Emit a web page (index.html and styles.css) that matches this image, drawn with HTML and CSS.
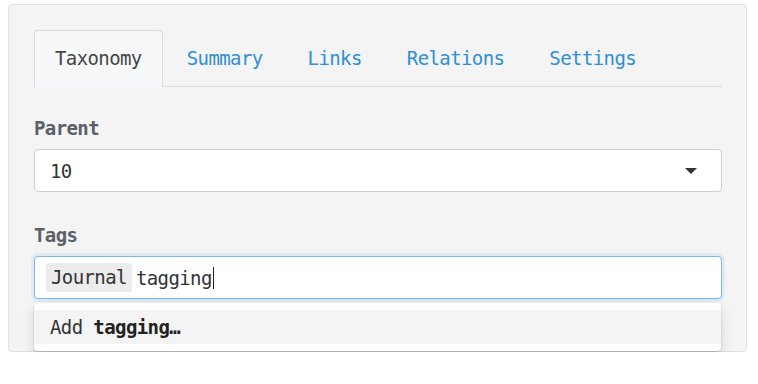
FILE: index.html
```html
<!DOCTYPE html>
<html lang="en">
<head>
<meta charset="UTF-8">
<meta name="viewport" content="width=device-width, initial-scale=1.0">
<title>Edit entry - Taxonomy</title>

<link rel="stylesheet" href="styles.css">

</head>
<body>
  <div class="panel">
    <ul class="tabs">
      <li class="tab active">Taxonomy</li>
      <li class="tab">Summary</li>
      <li class="tab">Links</li>
      <li class="tab">Relations</li>
      <li class="tab">Settings</li>
    </ul>

    <div class="field">
      <label class="fieldLabel">Parent</label>
      <div class="select">
        <span>10</span>
        <span class="caret"></span>
      </div>
    </div>

    <div class="field tagsField">
      <label class="fieldLabel">Tags</label>
      <div class="tagInput">
        <span class="chip">Journal</span>
        <span class="typed">tagging</span><span class="cursor"></span>
      </div>
      <div class="menu">
        <div class="menuItem">Add <b>tagging…</b></div>
      </div>
    </div>
  </div>
</body>
</html>
```

FILE: styles.css
```css
body {
    font-family: "DejaVu Sans Mono", monospace;
    font-size: 19px;
    letter-spacing: -0.6px;
    color: #333;
    background-color: #fff;
    margin: 0;
    padding: 4px 0 0 8px;
}
.panel {
    box-sizing: border-box;
    width: 739px;
    height: 348px;
    background-color: #f4f4f4;
    border: 1px solid #e1e1e1;
    border-radius: 4px;
    padding: 25px 24px 0 25px;
}
.tabs {
    display: flex;
    list-style-type: none;
    margin: 0 0 29px 0;
    padding: 0;
    border-bottom: 1px solid #dcdcdc;
}
.tab {
    height: 55px;
    line-height: 55px;
    padding: 0 20px;
    margin: 0 3px -1px 0;
    border: 1px solid transparent;
    border-bottom: none;
    border-radius: 4px 4px 0 0;
    color: #2f8fd3;
    cursor: pointer;
}
.tab.active {
    color: #444;
    background-color: #f6f8fa;
    border-color: #dcdcdc;
    height: 56px;
}
.field {
    margin-bottom: 31px;
}
.fieldLabel {
    display: block;
    font-weight: bold;
    color: #5b6066;
    line-height: 24px;
    margin-bottom: 9px;
}
.select {
    box-sizing: border-box;
    height: 43px;
    display: flex;
    align-items: center;
    justify-content: space-between;
    background-color: #fff;
    border: 1px solid #cfcfcf;
    border-radius: 4px;
    padding: 0 24px 0 15px;
}
.caret {
    width: 0;
    height: 0;
    border-left: 6px solid transparent;
    border-right: 6px solid transparent;
    border-top: 6px solid #333;
}
.tagsField {
    position: relative;
}
.tagInput {
    box-sizing: border-box;
    height: 43px;
    display: flex;
    align-items: center;
    background-color: #fff;
    border: 1px solid #79b5ee;
    border-radius: 4px;
    box-shadow: 0 0 0 3px rgba(121, 181, 238, 0.15);
    padding: 0 11px;
}
.chip {
    background-color: #ececec;
    border-radius: 3px;
    padding: 0 5px;
    line-height: 29px;
    margin-right: 4px;
}
.cursor {
    width: 1px;
    height: 22px;
    background-color: #222;
    margin-left: 1px;
}
.menu {
    position: absolute;
    top: 80px;
    left: 0;
    right: 1px;
    background-color: #fff;
    border-radius: 4px;
    box-shadow: 0 1px 2px rgba(0, 0, 0, 0.2), 0 5px 14px rgba(0, 0, 0, 0.12);
    padding: 7px 0;
}
.menuItem {
    background-color: #f4f4f4;
    line-height: 34px;
    padding: 0 16px;
}
.menuItem b {
    color: #222;
}
```
